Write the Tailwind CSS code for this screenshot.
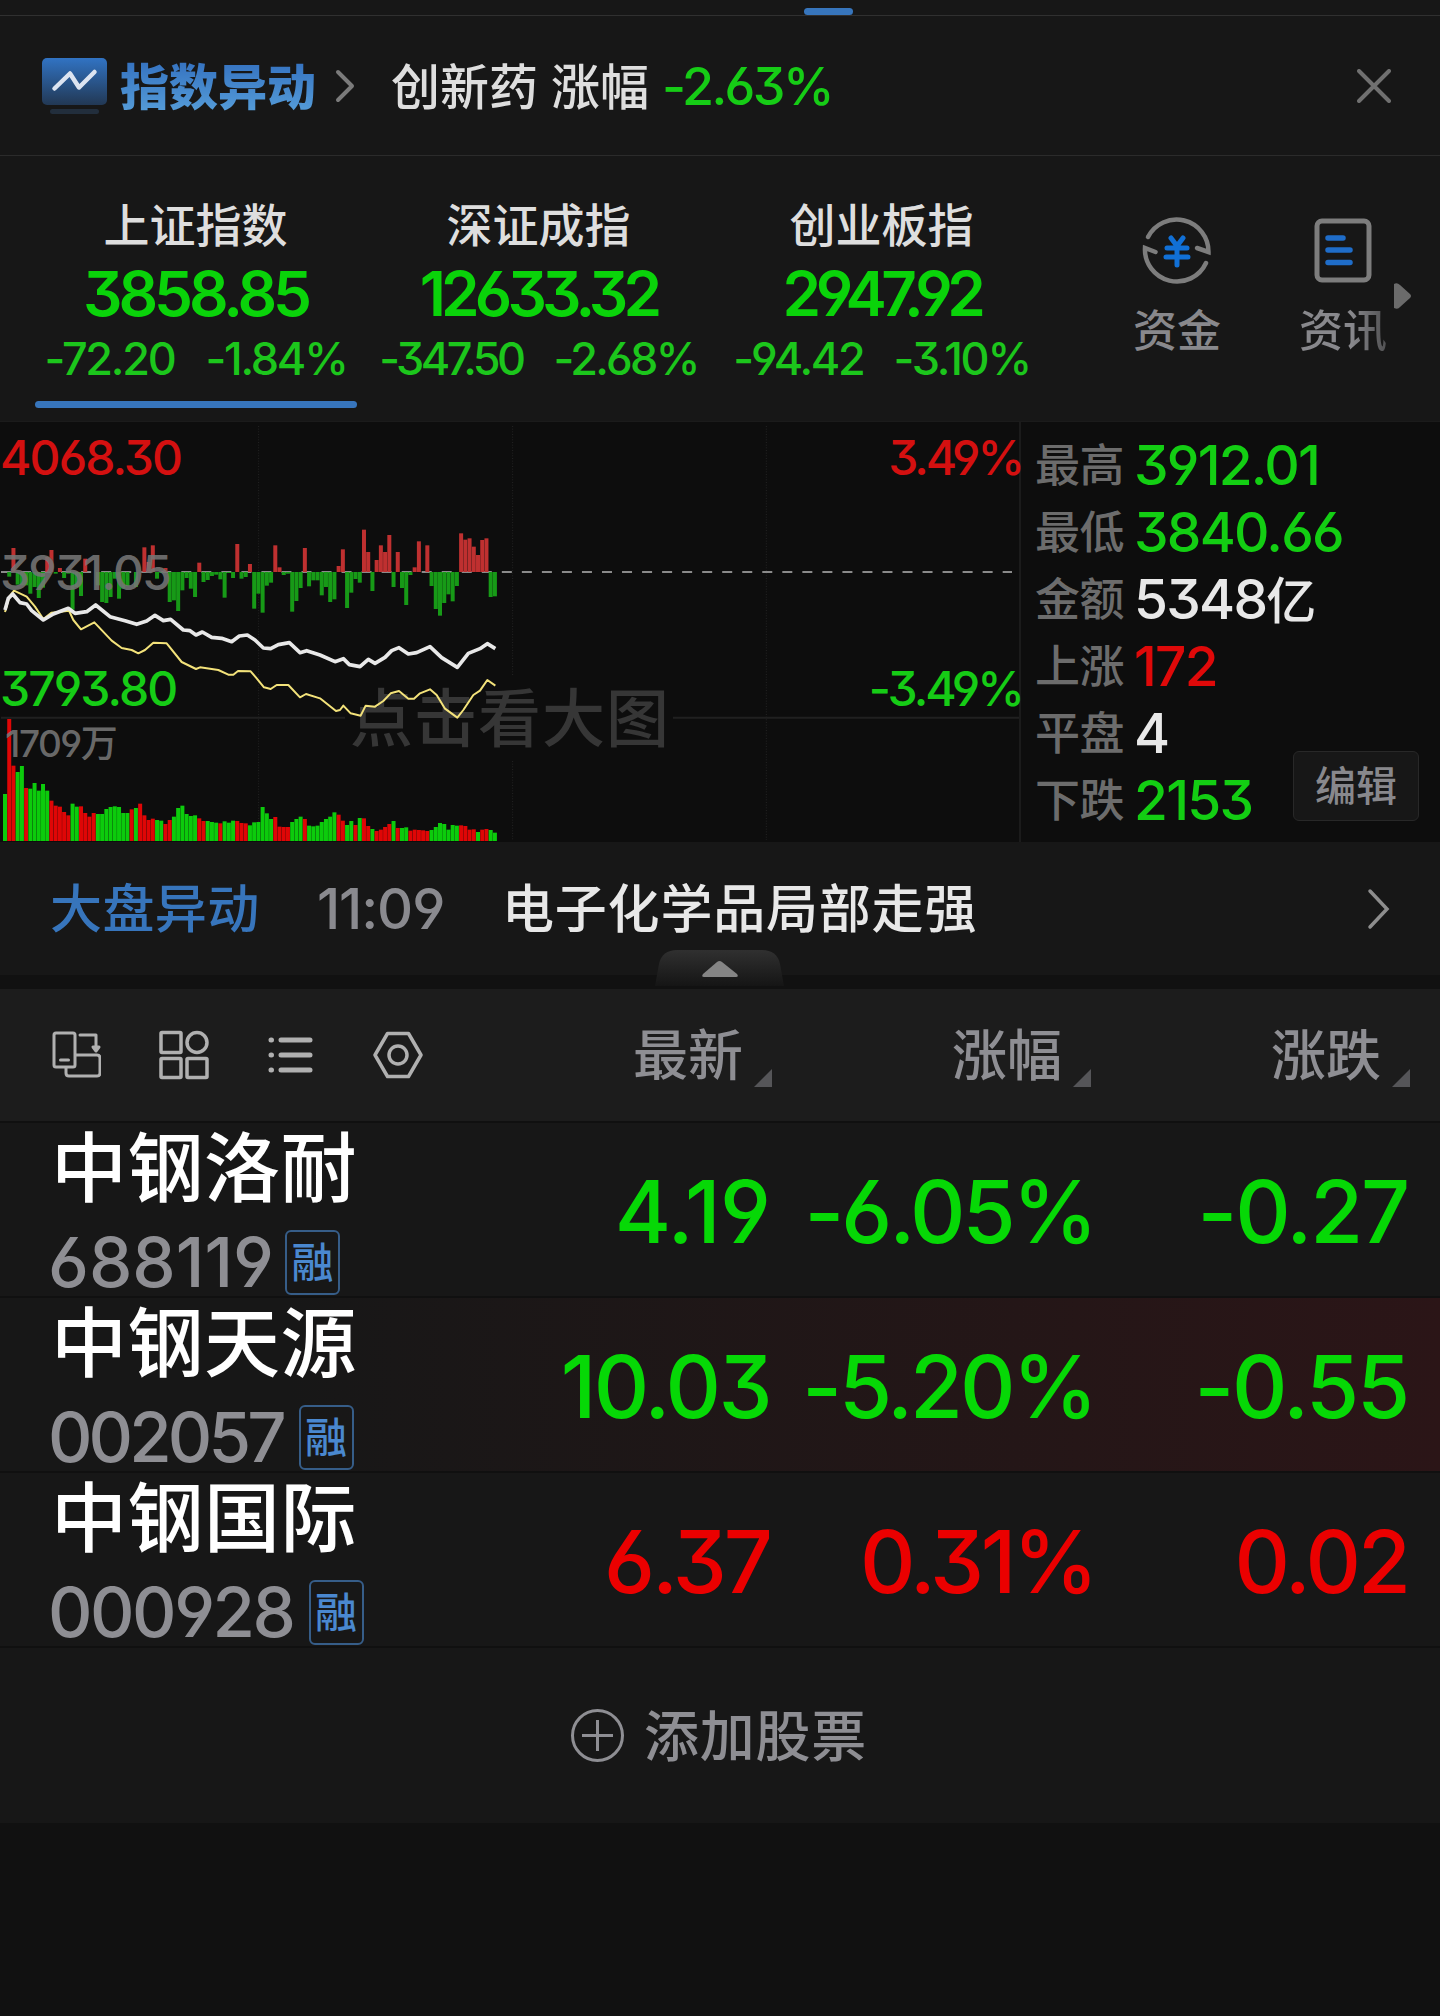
<!DOCTYPE html>
<html lang="zh-CN">

<head>
    <meta charset="UTF-8">
    <meta name="viewport" content="width=device-width, initial-scale=1.0">
    <script src="https://cdn.jsdelivr.net/npm/@tailwindcss/browser@4"></script>
    <title>自选股</title>
</head>

<body class="bg-[#111111] text-[#dedede] font-medium leading-none whitespace-nowrap overflow-x-hidden font-['Inter','Noto_Sans_CJK_SC',sans-serif] [font-feature-settings:'cv09','cv03','cv04']">
    <div class="w-[1440px]">
        <!-- tab strip -->
        <div class="h-4 bg-[#171717] border-b border-[#303030] pt-2">
            <div class="ml-[804px] w-[49px] h-[7px] rounded-full bg-[#3775bc]"></div>
        </div>

        <!-- index alert -->
        <div class="h-[140px] bg-[#171717] border-b border-[#2b2b2b] flex items-center pl-[42px] pr-[49px] pt-[1px]">
            <svg class="w-[65px] h-[57px]" viewBox="0 0 65 57" fill="none">
                <defs>
                    <linearGradient id="screen" x1="0" y1="0" x2="0" y2="1">
                        <stop offset="0" stop-color="#3173c3" />
                        <stop offset="1" stop-color="#223854" />
                    </linearGradient>
                </defs>
                <rect width="65" height="47" rx="5" fill="url(#screen)" />
                <rect x="8" y="51" width="49" height="5" rx="2.5" fill="#222e3c" />
                <path d="M12.500 30.500 28 15.500 37 29.500 52.500 14" stroke="#dce4f1" stroke-width="4.500" stroke-linecap="round" stroke-linejoin="round" />
            </svg>
            <span class="ml-[13px] pt-[2px] text-[49px] font-black bg-linear-to-b from-[#3572c0] to-[#559cd8] bg-clip-text text-transparent">指数异动</span>
            <svg class="ml-[19px] w-[20px] h-[34px]" viewBox="0 0 20 34" fill="none">
                <path d="M3 3 17 17 3 31" stroke="#7b7b7b" stroke-width="4" stroke-linecap="round" stroke-linejoin="round" />
            </svg>
            <span class="ml-[36px] pt-[2px] text-[49px]">创新药</span>
            <span class="ml-[13px] pt-[2px] text-[49px]">涨幅</span>
            <span class="ml-[13px] pt-[2px] text-[52px] tracking-[-0.05em] text-[#16cc16]">-2.63%</span>
            <svg class="ml-auto w-[34px] h-[34px]" viewBox="0 0 34 34" fill="none">
                <path d="M2 2 32 32M32 2 2 32" stroke="#707070" stroke-width="4" stroke-linecap="round" />
            </svg>
        </div>

        <!-- market indices -->
        <div class="h-[265px] bg-[#171717] flex pl-[24px]">
            <div class="w-[343px] pt-[46px] flex flex-col items-center">
                <div class="text-[46px]">上证指数</div>
                <div class="mt-[15px] text-[62px] font-semibold tracking-[-0.065em] text-[#0ad30a]">3858.85</div>
                <div class="mt-[11px] text-[45px] tracking-[-0.05em] text-[#1cc61c] flex gap-[31px]"><span>-72.20</span><span>-1.84%</span></div>
                <div class="mt-[20px] w-[322px] h-[7px] rounded-full bg-[#3775bc]"></div>
            </div>
            <div class="w-[343px] pt-[46px] flex flex-col items-center">
                <div class="text-[46px]">深证成指</div>
                <div class="mt-[15px] text-[62px] font-semibold tracking-[-0.078em] text-[#0ad30a]">12633.32</div>
                <div class="mt-[11px] text-[45px] text-[#1cc61c] flex gap-[31px]"><span class="tracking-[-0.08em]">-347.50</span><span class="tracking-[-0.06em]">-2.68%</span></div>
            </div>
            <div class="w-[343px] pt-[46px] flex flex-col items-center">
                <div class="text-[46px]">创业板指</div>
                <div class="mt-[15px] text-[62px] font-semibold tracking-[-0.087em] text-[#0ad30a]">2947.92</div>
                <div class="mt-[11px] text-[45px] tracking-[-0.05em] text-[#1cc61c] flex gap-[30px]"><span>-94.42</span><span>-3.10%</span></div>
            </div>
            <div class="ml-[80px] pt-[58px] flex flex-col items-center">
                <svg class="w-[72px] h-[72px]" viewBox="0 0 72 72" fill="none" stroke-linecap="round">
                    <g stroke="#7d7d7d" stroke-width="4.500">
                        <path d="M7 23A32 32 0 0 1 67.500 38L56 34" />
                        <path d="M65 49A32 32 0 0 1 4 34L14.500 38" />
                    </g>
                    <path d="M30 24 36 32 42 24M36 32V51M26 34H46M25 43H47" stroke="#1170d6" stroke-width="5" />
                </svg>
                <div class="mt-[23px] text-[44px] text-[#88888c]">资金</div>
            </div>
            <div class="ml-[78px] pt-[58px] flex flex-col items-center">
                <svg class="w-[60px] h-[72px]" viewBox="0 0 60 72" fill="none">
                    <rect x="4" y="7" width="52" height="59" rx="5" stroke="#7d7d7d" stroke-width="5" />
                    <path d="M15 24H30M15 36H37M15 48.500H37" stroke="#1f6dc9" stroke-width="5.500" stroke-linecap="round" />
                </svg>
                <div class="mt-[23px] text-[44px] text-transparent bg-linear-to-r from-[#88888c] from-60% to-[#505052] bg-clip-text">资讯</div>
            </div>
            <svg class="ml-[5px] mt-[126px] w-[20px] h-[28px]" viewBox="0 0 20 28">
                <path d="M2 2V26Q6 28 8 25L18 16Q20 14 18 12L8 3Q5 0 2 2Z" fill="#6b6b6b" />
            </svg>
        </div>

        <!-- intraday chart and figures -->
        <div class="h-[421px] bg-[#0d0d0d] border-t border-[#1b1b1b] flex">
            <div class="relative w-[1021px] h-[420px] border-r-2 border-[#1b1b1b]">
                <svg id="chart" class="block w-[1019px] h-[420px]" viewBox="0 6 3057 1260" fill="none">
                    <g stroke="#242424" stroke-width="3" stroke-dasharray="3 5">
                        <path d="M776 18V1260M1538 18V765M1538 1023V1260M2299 18V1260" />
                    </g>
                    <path d="M3 893H1035M2019 893H3060" stroke="#202020" stroke-width="6" />
                    <path d="M3 456H3036" stroke="#8a8a8a" stroke-width="6" stroke-dasharray="30 30.100" />
                    <text x="1050" y="962" font-size="189" font-weight="500" letter-spacing="3" fill="#363636">点击看大图</text>
                    <g id="diff"></g>
                    <g id="volume"></g>
                    <polyline stroke="#f3e27a" stroke-width="6" stroke-linejoin="round" points="15,576 28,530 42,512 80,530 105,560 130,597 155,578 207,572 220,600 243,628 283,607 335,662 365,684 395,690 415,700 435,690 460,668 500,670 545,726 588,747 600,742 655,750 685,764 700,764 714,753 752,754 770,775 792,802 812,807 830,795 865,795 900,832 918,822 960,835 1008,873 1020,870 1030,857 1052,880 1082,887 1097,857 1125,860 1150,843 1172,820 1197,813 1225,836 1242,836 1260,820 1290,808 1310,825 1335,866 1372,893 1390,870 1420,825 1440,812 1462,780 1486,797" />
                    <polyline stroke="#e8e8e8" stroke-width="11" stroke-linejoin="round" points="15,570 25,535 38,522 60,548 80,552 95,572 130,600 160,582 205,565 225,580 260,575 287,555 330,590 375,602 410,613 440,603 465,586 490,602 512,598 550,630 570,632 588,645 607,636 635,652 665,655 695,665 718,648 742,645 765,660 790,684 812,686 835,674 868,668 900,698 920,692 960,705 1005,725 1030,716 1048,734 1080,740 1105,718 1125,730 1155,712 1175,692 1197,683 1225,702 1250,698 1290,680 1325,713 1372,742 1405,700 1440,686 1462,671 1486,686" />
                </svg>
                <div class="absolute left-0 top-[12px] text-[48px] tracking-[-0.04em] text-[#d41010]">4068.30</div>
                <div class="absolute right-[-3px] top-[12px] text-[48px] tracking-[-0.065em] text-[#d41010]">3.49%</div>
                <div class="absolute left-0 top-[127px] text-[48px] tracking-[-0.038em] text-[#757575]/90">3931.05</div>
                <div class="absolute left-0 top-[243px] text-[48px] tracking-[-0.04em] text-[#16cc16]">3793.80</div>
                <div class="absolute right-[-3px] top-[243px] text-[48px] tracking-[-0.062em] text-[#16cc16]">-3.49%</div>
                <div class="absolute left-[5px] top-[303px] text-[37px] tracking-[-0.04em] text-[#757575]/90">1709万</div>
            </div>
            <div class="relative pl-[14px] pt-[10px] w-[419px] text-[55px] tracking-[-0.032em]">
                <div class="h-[67px] flex items-center"><span class="w-[99px] text-[45px] tracking-[-0.5px] text-[#6c6c6c]">最高</span><span class="text-[#13ce13]">3912.01</span></div>
                <div class="h-[67px] flex items-center"><span class="w-[99px] text-[45px] tracking-[-0.5px] text-[#6c6c6c]">最低</span><span class="text-[#13ce13]">3840.66</span></div>
                <div class="h-[67px] flex items-center"><span class="w-[99px] text-[45px] tracking-[-0.5px] text-[#6c6c6c]">金额</span><span class="text-[#e8e8e8]">5348<span class="text-[50px]">亿</span></span></div>
                <div class="h-[67px] flex items-center"><span class="w-[99px] text-[45px] tracking-[-0.5px] text-[#6c6c6c]">上涨</span><span class="text-[#df0909]">172</span></div>
                <div class="h-[67px] flex items-center"><span class="w-[99px] text-[45px] tracking-[-0.5px] text-[#6c6c6c]">平盘</span><span class="text-[#e8e8e8]">4</span></div>
                <div class="h-[67px] flex items-center"><span class="w-[99px] text-[45px] tracking-[-0.5px] text-[#6c6c6c]">下跌</span><span class="text-[#13ce13]">2153</span></div>
                <button class="absolute right-[21px] bottom-[21px] w-[126px] h-[70px] rounded-md bg-[#171717] border border-[#282828] text-[41px] tracking-normal font-medium text-[#88888c]">编辑</button>
            </div>
        </div>

        <!-- market news -->
        <div class="relative h-[133px] bg-[#171717] flex items-center pl-[50px] pr-[49px]">
            <span class="w-[267px] pt-[2px] text-[52px] tracking-[0.4px] text-[#3775bc]">大盘异动</span>
            <span class="w-[185px] pt-[1px] text-[56px] tracking-[-0.02em] text-[#8a8a8f]">11:09</span>
            <span class="pt-[2px] text-[52px] tracking-[0.8px] text-[#e8e8e8]">电子化学品局部走强</span>
            <svg class="ml-auto w-[24px] h-[42px]" viewBox="0 0 24 42" fill="none">
                <path d="M3 3 20 21 3 39" stroke="#8e8e8e" stroke-width="3.500" stroke-linecap="round" />
            </svg>
            <svg class="absolute left-[655px] top-[108px] w-[129px] h-[36px]" viewBox="0 0 129 36">
                <defs>
                    <linearGradient id="handle" x1="0" y1="0" x2="0" y2="1">
                        <stop offset="0" stop-color="#303030" />
                        <stop offset="1" stop-color="#151515" />
                    </linearGradient>
                </defs>
                <path d="M0 36 4 14Q7 0 22 0H107Q122 0 125 14L129 36Z" fill="url(#handle)" />
                <path d="M48 24 62 12Q64.500 10 67 12L82 24Q84 27 81 27H49Q46 27 48 24Z" fill="#858585" />
            </svg>
        </div>
        <div class="h-[14px]"></div>

        <!-- list header -->
        <div class="h-[134px] bg-[#1c1c1c] border-b-2 border-[#101010] flex items-center pl-[51px] pr-[30px] text-[#8e8e93]">
            <div class="w-[402px] flex text-[#b0b0b0]">
                <svg class="w-[50px] h-[50px]" viewBox="0 0 50 50" fill="none" stroke="currentColor" stroke-width="3" stroke-linejoin="round" stroke-linecap="round">
                    <rect x="3" y="3" width="21" height="34" rx="2" />
                    <path d="M9.500 30H17.500M29 5H45V18M25 25H46Q49 25 49 28V43Q49 46 46 46H18Q15 46 15 43V38" />
                    <path d="M42 17H48L45 21Z" fill="currentColor" />
                </svg>
                <svg class="ml-[58px] w-[50px] h-[50px]" viewBox="0 0 50 50" fill="none" stroke="currentColor" stroke-width="3.500">
                    <rect x="2" y="2.500" width="20" height="20" rx="1" />
                    <circle cx="38" cy="12.500" r="10" />
                    <rect x="2" y="28.500" width="20" height="19" rx="1" />
                    <rect x="28" y="28.500" width="20" height="19" rx="1" />
                </svg>
                <svg class="ml-[57px] w-[50px] h-[50px]" viewBox="0 0 50 50" fill="none" stroke="currentColor" stroke-width="5" stroke-linecap="round">
                    <path d="M5 10H5.500M5 25H5.500M5 40H5.500M15 10H44M15 25H44M15 40H44" />
                </svg>
                <svg class="ml-[57px] w-[50px] h-[50px]" viewBox="0 0 50 50" fill="none" stroke="currentColor" stroke-width="3.500" stroke-linejoin="round">
                    <path d="M14.500 3.500H35.500L48 25 35.500 46.500H14.500L2 25Z" />
                    <circle cx="25" cy="25" r="9" />
                </svg>
            </div>
            <div class="w-[319px] flex justify-end text-[55px] pt-[4px]">最新
                <svg class="ml-[11px] mt-[41px] w-[18px] h-[18px]" viewBox="0 0 18 18"><path d="M18 0V18H0Z" fill="#555558" /></svg>
            </div>
            <div class="w-[319px] flex justify-end text-[55px] pt-[4px]">涨幅
                <svg class="ml-[11px] mt-[41px] w-[18px] h-[18px]" viewBox="0 0 18 18"><path d="M18 0V18H0Z" fill="#555558" /></svg>
            </div>
            <div class="w-[319px] flex justify-end text-[55px] pt-[4px]">涨跌
                <svg class="ml-[11px] mt-[41px] w-[18px] h-[18px]" viewBox="0 0 18 18"><path d="M18 0V18H0Z" fill="#555558" /></svg>
            </div>
        </div>

        <!-- stocks -->
        <div class="h-[175px] bg-[#171717] border-b-2 border-[#101010] flex items-center pt-[4px] pl-[51px] pr-[30px] text-[86px] tracking-[-0.035em] text-[#06d806]">
            <div class="w-[402px] h-full pt-[3px]">
                <div class="text-[76px] tracking-[0.5px] text-white">中钢洛耐</div>
                <div class="mt-[22px] -ml-[3px] flex items-center"><span class="text-[69px] tracking-[0px] text-[#8e8e93]">688119</span><span class="ml-[11px] w-[55px] h-[65px] flex items-center justify-center rounded-md border-2 border-[#365d88] text-[42px] tracking-normal text-[#4a88cf]">融</span></div>
            </div>
            <div class="w-[319px] pr-[2px] text-right tracking-[-0.01em]">4.19</div>
            <div class="w-[323px] -mr-[4px] text-right">-6.05%</div>
            <div class="w-[319px] pr-[2px] text-right tracking-[-0.025em]">-0.27</div>
        </div>
        <div class="h-[175px] bg-linear-to-r from-[#171717] from-20% to-[#2b1517] border-b-2 border-[#101010] flex items-center pt-[4px] pl-[51px] pr-[30px] text-[86px] tracking-[-0.035em] text-[#06d806]">
            <div class="w-[402px] h-full pt-[3px]">
                <div class="text-[76px] tracking-[0.5px] text-white">中钢天源</div>
                <div class="mt-[22px] -ml-[3px] flex items-center"><span class="text-[69px] tracking-[-0.057em] text-[#8e8e93]">002057</span><span class="ml-[16px] w-[55px] h-[65px] flex items-center justify-center rounded-md border-2 border-[#365d88] text-[42px] tracking-normal text-[#4a88cf]">融</span></div>
            </div>
            <div class="w-[319px] pr-[2px] text-right tracking-[-0.03em]">10.03</div>
            <div class="w-[323px] -mr-[4px] text-right">-5.20%</div>
            <div class="w-[319px] pr-[2px] text-right tracking-[-0.025em]">-0.55</div>
        </div>
        <div class="h-[175px] bg-[#171717] border-b-2 border-[#101010] flex items-center pt-[4px] pl-[51px] pr-[30px] text-[86px] tracking-[-0.035em] text-[#eb0000]">
            <div class="w-[402px] h-full pt-[3px]">
                <div class="text-[76px] tracking-[0.5px] text-white">中钢国际</div>
                <div class="mt-[22px] -ml-[3px] flex items-center"><span class="text-[69px] tracking-[-0.036em] text-[#8e8e93]">000928</span><span class="ml-[15px] w-[55px] h-[65px] flex items-center justify-center rounded-md border-2 border-[#365d88] text-[42px] tracking-normal text-[#4a88cf]">融</span></div>
            </div>
            <div class="w-[319px] pr-[2px] text-right">6.37</div>
            <div class="w-[323px] -mr-[4px] text-right tracking-[-0.04em]">0.31%</div>
            <div class="w-[319px] pr-[2px] text-right">0.02</div>
        </div>

        <!-- add stock -->
        <div class="h-[175px] bg-[#171717] flex items-center justify-center pr-[2px] text-[#8e8e93]">
            <svg class="w-[53px] h-[53px]" viewBox="0 0 53 53" fill="none" stroke="currentColor" stroke-width="3">
                <circle cx="26.500" cy="26.500" r="25" />
                <path d="M26.500 11V42M11 26.500H42" />
            </svg>
            <span class="ml-[20px] pt-[2px] text-[55px] tracking-[0.7px]">添加股票</span>
        </div>
    </div>
</body>
<script>
    // one bar per minute: height and direction
    var volume = '141g 366r 226r 207g 225g 159r 157g 174g 151g 171g 151g 121r 106r 103r 87r 77r 112g 103g 104r 84r 73r 84r 81g 81g 96g 102g 104g 102g 84g 84g 95r 99g 112r 77r 63r 67r 63g 61g 51r 63r 73g 99g 106g 81g 75g 77g 68r 60r 60g 57g 55g 53r 59g 55g 61g 60r 54r 53r 47g 56g 57g 102g 83g 66g 72r 43r 42r 42r 57g 66g 73g 66r 46g 44g 46g 57g 66g 73g 86g 79r 61r 48g 60g 48r 69g 68r 45r 36g 30r 34r 42r 51r 60g 39r 39g 41g 31r 34r 33r 32r 30r 33g 42g 54g 51g 34g 48g 46g 47r 45r 34r 35r 27g 34r 36r 33g 25g';
    var diff = [0, -14, 72, -38, -40, -40, -65, -45, -78, -47, 45, 66, -5, 12, -18, -5, -113, -45, -72, 40, 0, 0, -40, -90, -93, -75, -20, -80, -50, -42, 0, -45, 0, 74, 30, 80, -20, -3, 12, -90, -85, -117, -55, -18, -50, -75, 28, -30, -24, -12, -8, -22, -77, -3, -18, 84, -20, -15, 24, -110, -65, -122, -41, -32, 80, 14, -9, -5, -119, -87, -48, 72, -43, -25, -25, -70, -45, -90, -82, 18, 68, -108, -62, -21, -32, 127, 60, -57, 36, 80, 60, 111, -45, 60, -48, -99, -9, 14, 92, 0, 80, -42, -111, -131, -93, -67, -88, -42, 116, 97, 101, 76, 51, 96, 101, -75, -73];
    var step = 12.67;

    function addBar(group, i, y, height, color) {
        var bar = document.createElementNS('http://www.w3.org/2000/svg', 'rect');
        bar.setAttribute('x', 9 + i * step);
        bar.setAttribute('y', y);
        bar.setAttribute('width', 12);
        bar.setAttribute('height', height);
        bar.setAttribute('fill', color);
        document.getElementById(group).appendChild(bar);
    }

    volume.split(' ').forEach(function (item, i) {
        var height = parseInt(item);
        addBar('volume', i, 1263 - height, height, item.endsWith('r') ? '#df0606' : '#0ccb0c');
    });
    diff.forEach(function (value, i) {
        addBar('diff', i, value > 0 ? 456 - value : 456, Math.abs(value), value > 0 ? '#bf3030' : '#179a17');
    });
</script>

</html>
